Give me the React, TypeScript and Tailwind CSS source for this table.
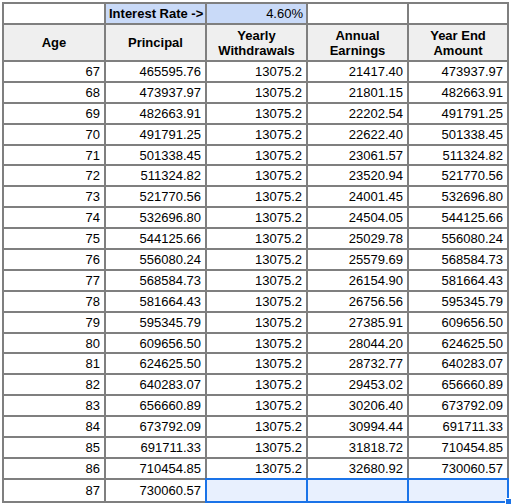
import { Fragment } from "react";

const rows: [number, string, string, string, string][] = [
  [67, "465595.76", "13075.2", "21417.40", "473937.97"],
  [68, "473937.97", "13075.2", "21801.15", "482663.91"],
  [69, "482663.91", "13075.2", "22202.54", "491791.25"],
  [70, "491791.25", "13075.2", "22622.40", "501338.45"],
  [71, "501338.45", "13075.2", "23061.57", "511324.82"],
  [72, "511324.82", "13075.2", "23520.94", "521770.56"],
  [73, "521770.56", "13075.2", "24001.45", "532696.80"],
  [74, "532696.80", "13075.2", "24504.05", "544125.66"],
  [75, "544125.66", "13075.2", "25029.78", "556080.24"],
  [76, "556080.24", "13075.2", "25579.69", "568584.73"],
  [77, "568584.73", "13075.2", "26154.90", "581664.43"],
  [78, "581664.43", "13075.2", "26756.56", "595345.79"],
  [79, "595345.79", "13075.2", "27385.91", "609656.50"],
  [80, "609656.50", "13075.2", "28044.20", "624625.50"],
  [81, "624625.50", "13075.2", "28732.77", "640283.07"],
  [82, "640283.07", "13075.2", "29453.02", "656660.89"],
  [83, "656660.89", "13075.2", "30206.40", "673792.09"],
  [84, "673792.09", "13075.2", "30994.44", "691711.33"],
  [85, "691711.33", "13075.2", "31818.72", "710454.85"],
  [86, "710454.85", "13075.2", "32680.92", "730060.57"],
];

const num = "bg-white h-[18.9px] px-[4px] text-right leading-[19px]";
const head = "bg-[#efefef] h-[35px] flex items-center justify-center text-center font-bold leading-[15px]";

export default function App() {
  return (
    <div className="w-[511px] h-[504px] bg-white overflow-hidden relative" style={{ fontFamily: '"Liberation Sans", Arial, sans-serif' }}>
      <div className="ml-[2px] mt-[2px] w-[507px] bg-[#7f7f7f] p-[2px] grid grid-cols-[100px_99px_99px_99px_98px] gap-[2px] text-[13px] text-black">
        {/* top row */}
        <div className="bg-white h-[19px]" />
        <div className="bg-[#c9daf8] h-[19px] px-[3px] font-bold leading-[19px] whitespace-nowrap">Interest Rate -&gt;</div>
        <div className="bg-[#c9daf8] h-[19px] px-[3px] text-right leading-[19px]">4.60%</div>
        <div className="bg-white h-[19px]" />
        <div className="bg-white h-[19px]" />

        {/* headers */}
        <div className={head}>Age</div>
        <div className={head}>Principal</div>
        <div className={head}>Yearly<br />Withdrawals</div>
        <div className={head}>Annual<br />Earnings</div>
        <div className={head}>Year End<br />Amount</div>

        {rows.map((r) => (
          <Fragment key={r[0]}>
            <div className={num}>{r[0]}</div>
            <div className={num}>{r[1]}</div>
            <div className={num}>{r[2]}</div>
            <div className={num}>{r[3]}</div>
            <div className={num}>{r[4]}</div>
          </Fragment>
        ))}

        {/* last row, selection on the empty cells */}
        <div className="bg-white h-[21px] px-[4px] text-right leading-[21px]">87</div>
        <div className="bg-white h-[21px] px-[4px] text-right leading-[21px]">730060.57</div>
        <div className="bg-[#e8f0fe] h-[21px] outline-2 outline-[#1a73e8]" />
        <div className="bg-[#e8f0fe] h-[21px] outline-2 outline-[#1a73e8]" />
        <div className="bg-[#e8f0fe] h-[21px] outline-2 outline-[#1a73e8] relative z-10">
          <div className="absolute right-[-5px] bottom-[-4px] w-[7px] h-[7px] bg-[#1a73e8] border border-white rounded-[1px]" />
        </div>
      </div>
    </div>
  );
}
